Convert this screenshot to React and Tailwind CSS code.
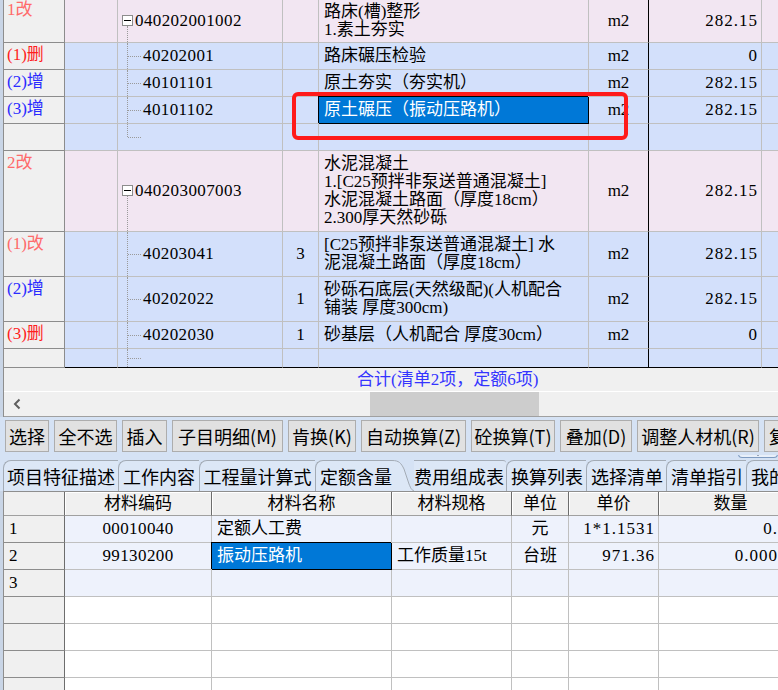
import React from 'react'

const SERIF = "font-['Liberation_Serif','Noto_Sans_CJK_SC',serif]"
const SANS = "font-['Noto_Sans_CJK_SC','Liberation_Sans',sans-serif]"
const PINK = 'bg-[#f2e6f2]'
const BLUE = 'bg-[#d3e0fb]'

const RED = 'text-[#ff1e1e]'
const SALMON = 'text-[#ff6a6a]'
const INDIGO = 'text-[#2b2bff]'

// 清单 / 定额 rows of the upper grid
const billRows = [
  { h: 'h-[43px]', bg: PINK, pad: 'pt-[1px]', label: '1改', color: SALMON, tree: 'parent', code: '040202001002', name: ['路床(槽)整形', '1.素土夯实'], unit: 'm2', qty: '282.15' },
  { h: 'h-[27px]', bg: BLUE, label: '(1)删', color: RED, tree: 'child', code: '40202001', name: ['路床碾压检验'], unit: 'm2', qty: '0' },
  { h: 'h-[27px]', bg: BLUE, label: '(2)增', color: INDIGO, tree: 'child', code: '40101101', name: ['原土夯实（夯实机）'], unit: 'm2', qty: '282.15' },
  { h: 'h-[27px]', bg: BLUE, label: '(3)增', color: INDIGO, tree: 'child', code: '40101102', name: ['原土碾压（振动压路机）'], unit: 'm2', qty: '282.15', selected: true },
  { h: 'h-[27px]', bg: BLUE, tree: 'end' },
  { h: 'h-[81px]', bg: PINK, label: '2改', color: SALMON, tree: 'parent', code: '040203007003', name: ['水泥混凝土', '1.[C25预拌非泵送普通混凝土]', '水泥混凝土路面（厚度18cm）', '2.300厚天然砂砾'], unit: 'm2', qty: '282.15' },
  { h: 'h-[45px]', bg: BLUE, label: '(1)改', color: SALMON, tree: 'child', code: '40203041', num: '3', name: ['[C25预拌非泵送普通混凝土] 水', '泥混凝土路面（厚度18cm）'], unit: 'm2', qty: '282.15' },
  { h: 'h-[45px]', bg: BLUE, label: '(2)增', color: INDIGO, tree: 'child', code: '40202022', num: '1', name: ['砂砾石底层(天然级配)(人机配合', '铺装 厚度300cm)'], unit: 'm2', qty: '282.15' },
  { h: 'h-[27px]', bg: BLUE, label: '(3)删', color: RED, tree: 'child', code: '40202030', num: '1', name: ['砂基层（人机配合 厚度30cm）'], unit: 'm2', qty: '0' },
  { h: 'h-[19px]', bg: BLUE, tree: 'child', last: true },
]

const tools = [
  ['选择', 'w-[44px] justify-center'],
  ['全不选', 'w-[63px] justify-center'],
  ['插入', 'w-[45px] justify-center'],
  ['子目明细(M)', 'w-[111px] justify-center'],
  ['肯换(K)', 'w-[68px] justify-center'],
  ['自动换算(Z)', 'w-[105px] justify-center'],
  ['砼换算(T)', 'w-[84px] justify-center'],
  ['叠加(D)', 'w-[72px] justify-center'],
  ['调整人材机(R)', 'w-[122px] justify-center'],
  ['复制', 'w-[60px] pl-[4px]'],
]

const tabsBefore = [
  ['项目特征描述', 'w-[115px]'],
  ['工作内容', 'w-[81px]'],
  ['工程量计算式', 'w-[116px]'],
]
const tabsAfter = [
  ['换算列表', 'w-[80px]'],
  ['选择清单', 'w-[80px]'],
  ['清单指引', 'w-[80px]'],
  ['我的', 'w-[80px]'],
]

const matCols = [
  ['材料编码', 'w-[147px]'],
  ['材料名称', 'w-[180px]'],
  ['材料规格', 'w-[120px]'],
  ['单位', 'w-[57px]'],
  ['单价', 'w-[90px]'],
  ['数量', 'w-[144px]'],
]

const matRows = [
  { n: '1', code: '00010040', name: '定额人工费', spec: '', unit: '元', price: '1*1.1531', qty: '0.62', fill: true },
  { n: '2', code: '99130200', name: '振动压路机', spec: '工作质量15t', unit: '台班', price: '971.36', qty: '0.00036', fill: true, selected: true },
  { n: '3', fill: true },
  {}, {}, {}, {},
]

function TreeLines({ kind }) {
  const dot = 'absolute left-[9px] border-l border-dotted border-[#9a9a9a]'
  const tick = 'absolute left-[10px] top-1/2 w-[13px] border-t border-dotted border-[#9a9a9a]'
  if (kind === 'parent') {
    return (
      <>
        <div className="absolute left-[4px] top-1/2 -mt-[6px] w-[11px] h-[11px] border border-[#8c8c8c] bg-white flex items-center justify-center">
          <div className="w-[7px] h-px bg-black" />
        </div>
        <div className={`${dot} top-1/2 mt-[5px] bottom-0`} />
      </>
    )
  }
  if (kind === 'end') {
    return (
      <>
        <div className={`${dot} top-0 h-1/2`} />
        <div className={tick} />
      </>
    )
  }
  return (
    <>
      <div className={`${dot} top-0 bottom-0`} />
      <div className={tick} />
    </>
  )
}

function BillRow({ r }) {
  const line = r.last ? 'border-b-black' : 'border-b-[#c0c0c0]'
  const cell = `border-r border-b border-r-[#c0c0c0] ${line}`
  const nameCls = r.selected
    ? 'bg-[#0078d7] text-white border-r border-b border-black shadow-[-1px_-1px_0_0_#000]'
    : `${r.bg} ${cell}`
  return (
    <div className={`flex ${r.h} ${SERIF} text-[17px] leading-[18px] text-black`}>
      <div className={`w-[61px] shrink-0 bg-[#f0f0f0] border-r border-b border-[#8c8c8c] pl-[3px] whitespace-nowrap ${r.pad || 'pt-[3px]'} ${r.color || ''}`}>
        {r.label}
      </div>
      <div className={`w-[53px] shrink-0 ${r.bg} ${cell}`} />
      <div className={`relative w-[165px] shrink-0 flex items-center ${r.bg} ${cell}`}>
        <TreeLines kind={r.tree} />
        {r.code && (
          <span className={`tracking-[0.4px] ${r.tree === 'parent' ? 'pl-[17px]' : 'pl-[25px]'}`}>{r.code}</span>
        )}
      </div>
      <div className={`w-[36px] shrink-0 flex items-center justify-center ${r.bg} ${cell}`}>{r.num}</div>
      <div className={`w-[270px] shrink-0 flex flex-col justify-center pl-[5px] whitespace-nowrap overflow-hidden ${nameCls}`}>
        {r.name && r.name.map((t, i) => <div key={i}>{t}</div>)}
      </div>
      <div className={`w-[60px] shrink-0 flex items-center justify-center ${r.bg} border-r border-b border-r-black ${line}`}>{r.unit}</div>
      <div className={`w-[113px] shrink-0 flex items-center justify-end pr-[3px] tracking-[1px] ${r.bg} ${cell}`}>{r.qty}</div>
      <div className={`flex-1 ${r.bg} border-b ${line}`} />
    </div>
  )
}

function MatRow({ r }) {
  const bg = r.fill ? 'bg-[#eef2fc]' : 'bg-white'
  const cell = `border-r border-b border-[#c0c0c0] shrink-0 flex items-center whitespace-nowrap overflow-hidden`
  return (
    <div className={`flex h-[27px] shrink-0 ${SERIF} text-[17px] text-black`}>
      <div className="w-[61px] shrink-0 bg-[#f0f0f0] border-r border-r-[#6d6d6d] border-b border-b-[#8c8c8c] flex items-center pl-[5px]">{r.n}</div>
      <div className={`w-[147px] justify-center tracking-[0.4px] ${bg} ${cell}`}>{r.code}</div>
      <div
        className={`w-[180px] pl-[5px] ${cell} ${
          r.selected ? 'bg-[#0078d7] text-white !border-black shadow-[-1px_-1px_0_0_#000]' : bg
        }`}
      >
        {r.name}
      </div>
      <div className={`w-[120px] pl-[5px] ${bg} ${cell}`}>{r.spec}</div>
      <div className={`w-[57px] justify-center ${bg} ${cell}`}>{r.unit}</div>
      <div className={`w-[90px] justify-end pr-[3px] tracking-[1px] ${bg} ${cell}`}>{r.price}</div>
      <div className={`w-[144px] justify-end pr-[5px] tracking-[1px] ${bg} ${cell}`}>{r.qty}</div>
    </div>
  )
}

export default function App() {
  return (
    <div className="w-[778px] h-[690px] overflow-hidden bg-[#d5e2f4] flex flex-col">
      {/* Upper grid */}
      <div className="h-[417px] shrink-0 flex flex-col border-l-[3px] border-[#c9d5e6]">
        <div className="flex-1 flex flex-col border-l border-[#8e8e8e] bg-[#f0f0f0] overflow-hidden">
          <div className="relative">
            {billRows.map((r, i) => (
              <BillRow key={i} r={r} />
            ))}
            <div className="absolute left-[288px] top-[92px] w-[336px] h-[48px] border-[4px] border-[#ff1a1a] rounded-[6px]" />
          </div>

          {/* totals */}
          <div className={`h-[24px] shrink-0 border-b border-white flex items-center pl-[353px] ${SERIF} text-[17px] text-[#3434ff] whitespace-nowrap`}>
            合计(清单2项，定额6项)
          </div>

          {/* horizontal scrollbar */}
          <div className="h-[25px] shrink-0 border-b border-[#a0a0a0] flex">
            <div className="w-[40px] flex items-center pl-[9px]">
              <svg width="8" height="12" viewBox="0 0 8 12">
                <path d="M6.5 1.5 L2 6 L6.5 10.5" fill="none" stroke="#5f5f5f" strokeWidth="2" />
              </svg>
            </div>
            <div className="ml-[326px] w-[169px] bg-[#cdcdcd]" />
          </div>
        </div>
      </div>

      {/* Toolbar */}
      <div className={`h-[38px] shrink-0 flex gap-[5px] pt-[3px] pl-[5px] overflow-hidden ${SANS}`}>
        {tools.map(([t, w]) => (
          <div
            key={t}
            className={`${w} h-[32px] shrink-0 border border-[#adadad] bg-[#e1e1e1] flex items-center text-[18px] leading-none text-black whitespace-nowrap overflow-hidden`}
          >
            {t}
          </div>
        ))}
      </div>

      {/* Tab strip */}
      <div className={`relative h-[36px] shrink-0 flex items-end pl-[3px] overflow-hidden ${SANS} text-[18px] text-black`}>
        {tabsBefore.map(([t, w]) => (
          <div
            key={t}
            className={`${w} h-[31px] shrink-0 border-l border-t border-[#a3abb5] rounded-tl-[8px] bg-[#dce7f6] flex items-center justify-center whitespace-nowrap`}
          >
            {t}
          </div>
        ))}
        <div className="w-[77px] h-[31px] shrink-0 border-l border-t border-[#a3abb5] rounded-tl-[8px] bg-[#dce7f6] flex items-center pl-[4px] whitespace-nowrap">
          定额含量
        </div>
        <svg width="22" height="31" viewBox="0 0 22 31" className="shrink-0 block">
          <path d="M0 0.5 C7 0.5 9 3 12 9 L17 24 C19 29 20 30.5 22 30.5 L22 31 L0 31 Z" fill="#dce7f6" />
          <path d="M0 0.5 C7 0.5 9 3 12 9 L17 24 C19 29 20 30.5 22 30.5" fill="none" stroke="#a3abb5" />
        </svg>
        <div className="w-[92px] h-[31px] shrink-0 border-t border-[#a3abb5] rounded-tr-[3px] bg-[#dce7f6] flex items-center whitespace-nowrap">
          费用组成表
        </div>
        {tabsAfter.map(([t, w]) => (
          <div
            key={t}
            className={`${w} h-[31px] shrink-0 border-l border-t border-[#a3abb5] rounded-tl-[8px] bg-[#dce7f6] flex items-center pl-[4px] whitespace-nowrap`}
          >
            {t}
          </div>
        ))}
        <div className="absolute right-0 top-[-4px] w-[40px] h-[7px] border border-t-0 border-[#7f9cc2] rounded-b-[4px] bg-[#e8eff9] flex justify-center">
          <div className="mt-[1px] w-0 h-0 border-x-[4px] border-x-transparent border-t-[4px] border-t-[#4a5a70]" />
        </div>
      </div>

      {/* Lower grid: 人材机 */}
      <div className="flex-1 flex flex-col border-l-[3px] border-[#c9d5e6] min-h-0">
        <div className="flex-1 flex flex-col border-l border-t border-[#8e8e8e] bg-white overflow-hidden">
          <div className={`flex h-[24px] shrink-0 ${SERIF} text-[17px] text-black`}>
            <div className="w-[61px] shrink-0 bg-[#f0f0f0] border-r border-r-[#6d6d6d] border-b border-b-[#a0a0a0]" />
            {matCols.map(([t, w]) => (
              <div
                key={t}
                className={`${w} shrink-0 bg-[#f0f0f0] border-r border-r-[#6d6d6d] border-b border-b-[#a0a0a0] shadow-[inset_1px_1px_0_#fff] flex items-center justify-center whitespace-nowrap`}
              >
                {t}
              </div>
            ))}
          </div>
          {matRows.map((r, i) => (
            <MatRow key={i} r={r} />
          ))}
        </div>
      </div>
    </div>
  )
}
